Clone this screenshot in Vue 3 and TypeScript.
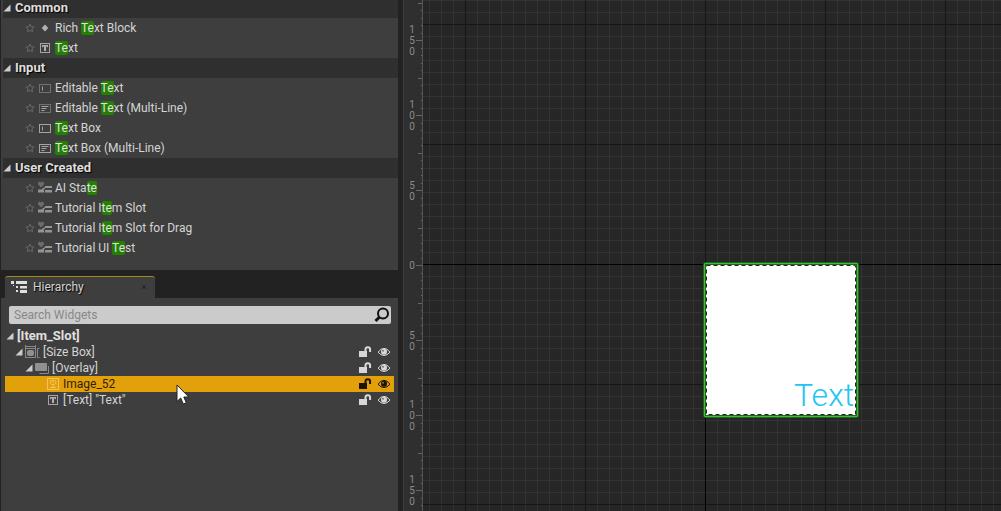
<script setup lang="ts">
import { computed, onBeforeUnmount, onMounted, ref } from 'vue'

interface PaletteItem {
  icon: 'rich' | 'text' | 'edit' | 'editMulti' | 'box' | 'boxMulti' | 'user'
  parts: [string, string, string]
}
interface PaletteGroup {
  name: string
  items: PaletteItem[]
}
interface TreeRow {
  label: string
  icon: 'none' | 'size' | 'overlay' | 'image' | 'text'
  depth: number
  selected?: boolean
}

const groups: PaletteGroup[] = [
  {
    name: 'Common',
    items: [
      { icon: 'rich', parts: ['Rich ', 'Te', 'xt Block'] },
      { icon: 'text', parts: ['', 'Te', 'xt'] },
    ],
  },
  {
    name: 'Input',
    items: [
      { icon: 'edit', parts: ['Editable ', 'Te', 'xt'] },
      { icon: 'editMulti', parts: ['Editable ', 'Te', 'xt (Multi-Line)'] },
      { icon: 'box', parts: ['', 'Te', 'xt Box'] },
      { icon: 'boxMulti', parts: ['', 'Te', 'xt Box (Multi-Line)'] },
    ],
  },
  {
    name: 'User Created',
    items: [
      { icon: 'user', parts: ['AI Sta', 'te', ''] },
      { icon: 'user', parts: ['Tutorial I', 'te', 'm Slot'] },
      { icon: 'user', parts: ['Tutorial I', 'te', 'm Slot for Drag'] },
      { icon: 'user', parts: ['Tutorial UI ', 'Te', 'st'] },
    ],
  },
]

const tree: TreeRow[] = [
  { label: '[Item_Slot]', icon: 'none', depth: 0 },
  { label: '[Size Box]', icon: 'size', depth: 1 },
  { label: '[Overlay]', icon: 'overlay', depth: 2 },
  { label: 'Image_52', icon: 'image', depth: 3, selected: true },
  { label: '[Text] "Text"', icon: 'text', depth: 3 },
]

const viewHeight = ref(window.innerHeight)
const measure = () => {
  viewHeight.value = window.innerHeight
}
onMounted(() => window.addEventListener('resize', measure))
onBeforeUnmount(() => window.removeEventListener('resize', measure))

const rulerOrigin = 265
const ticks = computed(() => {
  const count = Math.ceil(viewHeight.value / 7.5) + 1
  return Array.from({ length: count }, (_, i) => {
    const n = i - 35
    const length = n % 10 === 0 ? 7 : n % 5 === 0 ? 5 : 2
    return { y: rulerOrigin + Math.round(n * 7.5), length }
  })
})
const labels = computed(() => {
  const count = Math.floor((viewHeight.value - 20 - rulerOrigin) / 75) + 4
  return Array.from({ length: Math.max(count, 0) }, (_, i) => {
    const n = i - 3
    const digits = String(Math.abs(n) * 50).split('')
    return digits.map((digit, k) => ({
      digit,
      y: rulerOrigin + n * 75 + 4 + Math.round((k - (digits.length - 1) / 2) * 11),
      key: `${n}-${k}`,
    }))
  }).flat()
})
</script>

<template>
  <main class="editor">
    <div class="side">
      <section class="palette" aria-label="Palette">
        <div class="groups">
          <template v-for="group in groups" :key="group.name">
            <h2 class="group">
              <svg class="arrow" viewBox="0 0 8 8" aria-hidden="true"><path d="M7.5 0.5v7h-7z" /></svg>
              {{ group.name }}
            </h2>
            <ul class="items">
              <li v-for="item in group.items" :key="item.parts.join('')" class="item">
                <button class="star" type="button" :aria-label="'Favorite ' + item.parts.join('')">
                  <svg viewBox="0 0 10 10">
                    <path d="M5 1l1.2 2.7 2.9.3-2.2 1.9.7 2.9L5 7.3 2.4 8.8l.7-2.9L.9 4l2.9-.3z" />
                  </svg>
                </button>
                <svg class="glyph" viewBox="0 0 16 16" aria-hidden="true">
                  <path v-if="item.icon === 'rich'" class="fill" d="M8 4.5l3.3 3.5L8 11.5 4.7 8z" />
                  <template v-else-if="item.icon === 'text'">
                    <rect class="line" x="3.5" y="3.5" width="9" height="9" />
                    <path class="fill" d="M5 5h6v2.300h-1V6.500H9v4.500H7V6.500H6v.8H5z" />
                  </template>
                  <template v-else-if="item.icon === 'user'">
                    <path class="heart" d="M1 3l1.500-1.500L4 2.500l1.500-1L7 3v1.500L4 7.500 1 4.500z" />
                    <path class="user" d="M8 6h7v2H8zM8 10h7v2.500H8zM1 9.500h6v3H1z" />
                    <path class="user" d="M4 9.500L8 7v1.500L6 10z" />
                  </template>
                  <template v-else>
                    <rect
                      class="line"
                      :class="{ dotted: item.icon === 'edit' || item.icon === 'editMulti' }"
                      x="2.5"
                      y="4.5"
                      width="11"
                      height="8"
                    />
                    <path
                      v-if="item.icon === 'edit' || item.icon === 'box'"
                      class="line"
                      d="M5.5 6.5v4"
                    />
                    <path v-else class="line" d="M4.5 6.5h7M4.5 8.5h5M4.5 10.5h3" />
                  </template>
                </svg>
                <span class="name">{{ item.parts[0] }}<mark>{{ item.parts[1] }}</mark>{{ item.parts[2] }}</span>
              </li>
            </ul>
          </template>
        </div>
      </section>

      <section class="hierarchy" aria-label="Hierarchy">
        <div class="tabs">
          <div class="tab">
            <svg class="tab-icon" viewBox="0 0 16 14" aria-hidden="true">
              <path d="M0 1h3v3H0zM5 1h11v3H5zM5 6h2v2H5zM9 6h7v2.500H9zM5 10h2v2H5zM9 10h7v3H9zM2 5h1v1H2z" />
            </svg>
            <span>Hierarchy</span>
            <button class="close" type="button" aria-label="Close Hierarchy">
              <svg viewBox="0 0 6 6"><path d="M1 1l4 4M5 1l-4 4" /></svg>
            </button>
          </div>
        </div>
        <div class="panel">
          <label class="search">
            <input type="text" placeholder="Search Widgets" aria-label="Search Widgets" />
            <svg viewBox="0 0 16 16" aria-hidden="true">
              <circle cx="9" cy="6.5" r="5" />
              <path class="handle" d="M5.300 10.300L1.500 14" />
            </svg>
          </label>
          <ul class="tree">
            <li
              v-for="row in tree"
              :key="row.label"
              class="row"
              :class="['depth-' + row.depth, { selected: row.selected }]"
            >
              <svg v-if="row.depth < 3" class="arrow" viewBox="0 0 8 8" aria-hidden="true">
                <path d="M7.5 0.5v7h-7z" />
              </svg>
              <svg v-if="row.icon !== 'none'" class="glyph" viewBox="0 0 16 16" aria-hidden="true">
                <template v-if="row.icon === 'size'">
                  <rect class="dim" x="1.5" y="4.5" width="10" height="9" />
                  <rect class="core" x="3" y="6" width="7" height="6" rx="2" />
                  <path class="dim" d="M1 2.500h11M1.500 1v3M11.500 1v3M15.500 4.500h-2v9h2" />
                </template>
                <template v-else-if="row.icon === 'overlay'">
                  <rect class="core" x="1" y="3" width="12" height="8" rx="1" />
                  <path class="dim" d="M14.500 6v7.500h-9" />
                </template>
                <template v-else-if="row.icon === 'image'">
                  <rect class="pic" x="2.5" y="2.5" width="11" height="11" />
                  <path
                    class="pic"
                    d="M8 12V8M5 11.500h6M5 6a2 2 0 0 1 3-1.500A2 2 0 0 1 11 6c0 2-1.500 2.500-3 2.500S5 8 5 6zM7 6h2"
                  />
                </template>
                <template v-else>
                  <rect class="line" x="3.5" y="3.5" width="9" height="9" />
                  <path class="fill" d="M5 5h6v2.300h-1V6.500H9v4.500H7V6.500H6v.8H5z" />
                </template>
              </svg>
              <span class="label">{{ row.label }}</span>
              <template v-if="row.depth > 0">
                <button class="tool" type="button" :aria-label="'Lock ' + row.label">
                  <svg viewBox="0 0 14 12">
                    <path class="solid" d="M1 5h8v6H1z" />
                    <path class="shackle" d="M7.500 6V3.500a2.300 2.300 0 0 1 4.600 0V6" />
                  </svg>
                </button>
                <button class="tool" type="button" :aria-label="'Toggle visibility of ' + row.label">
                  <svg viewBox="0 0 14 12">
                    <path class="lid" d="M1 6.200Q7-1.500 13 6.200Q7 12.900 1 6.200z" />
                    <circle class="solid" cx="7" cy="5.800" r="3" />
                    <circle class="glint" cx="6" cy="4.800" r="1" />
                  </svg>
                </button>
              </template>
            </li>
          </ul>
        </div>
      </section>
    </div>

    <section class="designer" aria-label="Designer">
      <svg class="ruler" aria-hidden="true">
        <path v-for="tick in ticks" :key="tick.y" :d="`M${19 - tick.length} ${tick.y}.5h${tick.length}`" />
        <text v-for="label in labels" :key="label.key" x="8" :y="label.y">{{ label.digit }}</text>
      </svg>
      <div class="canvas">
        <div class="axis-x"></div>
        <div class="axis-y"></div>
        <div class="widget">
          <svg class="dashes" viewBox="0 0 150 150" aria-hidden="true">
            <rect x="0.5" y="0.5" width="149" height="149" />
          </svg>
          <span>Text</span>
        </div>
      </div>
    </section>

    <svg class="cursor" viewBox="0 0 14 22" aria-hidden="true">
      <path d="M1 1v16.500l3.700-3.500 2.600 6 3-1.300-2.500-5.700h5z" />
    </svg>
  </main>
</template>

<style>
body {
  margin: 0;
  background: #222;
}
</style>

<style scoped>
.editor {
  position: relative;
  display: flex;
  height: 100vh;
  overflow: hidden;
  background: #222;
  color: #d4d4d4;
  font: 12px/16px Roboto, 'Liberation Sans', sans-serif;
}
.editor * {
  box-sizing: border-box;
}
h2,
ul {
  margin: 0;
  padding: 0;
  list-style: none;
}
button {
  padding: 0;
  border: 0;
  background: none;
  color: inherit;
}
svg {
  display: block;
  flex: none;
}
.side {
  display: flex;
  flex: none;
  flex-direction: column;
  width: 398px;
  padding-left: 1px;
}
.palette {
  flex: none;
  padding: 0 0 12px 2px;
  overflow: hidden;
  background: #3e3e3e;
}
.groups {
  margin-top: -2px;
}
.group {
  display: flex;
  align-items: center;
  gap: 4px;
  height: 20px;
  background: #2f2f2f;
  color: #dedede;
  font-size: 13px;
  font-weight: 700;
  text-shadow: 1px 1px 1px #000;
}
.arrow {
  width: 8px;
  height: 8px;
  fill: #ccc;
}
.item {
  display: flex;
  align-items: center;
  height: 20px;
  padding-left: 22px;
}
.star {
  width: 10px;
  height: 10px;
}
.star path {
  fill: none;
  stroke: #686868;
}
.glyph {
  width: 16px;
  height: 16px;
}
.item .glyph {
  margin: 0 2px;
}
.fill {
  fill: #b0b0b0;
}
.line {
  fill: none;
  stroke: #a5a5a5;
}
.dotted {
  stroke-dasharray: 1 1;
}
.heart {
  fill: #6c6c6c;
}
.user {
  fill: #939393;
}
.name {
  white-space: pre;
}
mark {
  border-radius: 2px;
  background: #238000;
  color: #e0e0e0;
}
.hierarchy {
  display: flex;
  flex: 1;
  flex-direction: column;
  padding-top: 6px;
}
.tabs {
  padding-left: 4px;
}
.tab {
  display: flex;
  align-items: center;
  width: 150px;
  height: 22px;
  padding: 0 8px 2px 6px;
  border-top: 1px solid #a08a1c;
  border-radius: 3px 3px 0 0;
  background: #3e3e3e;
  text-shadow: 1px 1px 1px #000;
}
.tab-icon {
  width: 16px;
  height: 14px;
  margin-right: 6px;
  fill: #e0e0e0;
}
.close {
  width: 6px;
  height: 6px;
  margin-left: auto;
}
.close path {
  stroke: #222;
}
.panel {
  flex: 1;
  padding: 8px 4px 0;
  background: #3e3e3e;
}
.search {
  display: flex;
  align-items: center;
  height: 18px;
  margin: 0 3px 4px 4px;
  padding: 0 1px 0 5px;
  border-radius: 2px;
  background: #cbcbcb;
}
.search input {
  flex: 1;
  min-width: 0;
  height: 18px;
  padding: 0;
  border: 0;
  outline: 0;
  background: none;
  color: #222;
  font: inherit;
}
.search input::placeholder {
  color: #888;
  opacity: 1;
}
.search svg {
  width: 16px;
  height: 16px;
  fill: none;
  stroke: #111;
  stroke-width: 2;
}
.search .handle {
  stroke-width: 3;
}
.row {
  display: flex;
  align-items: center;
  height: 16px;
  padding-right: 3px;
}
.row .arrow {
  margin-right: 3px;
}
.depth-0 {
  padding-left: 1px;
  color: #e0e0e0;
  font-size: 13px;
  font-weight: 700;
}
.depth-1 {
  padding-left: 10px;
}
.depth-2 {
  padding-left: 20px;
}
.depth-3 {
  padding-left: 40px;
}
.row .glyph {
  margin-right: 2px;
}
.depth-1 .arrow,
.depth-2 .arrow {
  margin-right: 1px;
}
.depth-1 .glyph {
  margin-right: 3px;
}
.label {
  flex: 1;
}
.selected {
  background: #e2a00a;
  color: #33200a;
}
.dim {
  fill: none;
  stroke: #888;
}
.core {
  fill: #909090;
}
.pic {
  fill: none;
  stroke: #f2c55c;
}
.tool {
  width: 14px;
  height: 12px;
  margin-left: 5px;
  color: #d8d8d8;
}
.selected .tool {
  color: #1c1400;
}
.solid {
  fill: currentColor;
}
.shackle {
  fill: none;
  stroke: currentColor;
  stroke-width: 2;
}
.lid {
  fill: none;
  stroke: currentColor;
}
.glint {
  fill: #777;
}
.designer {
  display: flex;
  flex: 1;
  min-width: 0;
  margin-left: 5px;
}
.ruler {
  width: 20px;
  height: 100%;
  border-right: 1px solid #555;
  border-left: 1px solid #3c3c3c;
  background: #2f2f2f;
}
.ruler path {
  stroke: #666;
}
.ruler text {
  fill: #8c8c8c;
  font-size: 10px;
  text-anchor: middle;
}
.canvas {
  position: relative;
  flex: 1;
  overflow: hidden;
  background-color: #262626;
  background-image:
    linear-gradient(90deg, #161616 1px, transparent 1px),
    linear-gradient(#161616 1px, transparent 1px),
    linear-gradient(90deg, #333 1px, transparent 1px),
    linear-gradient(#333 1px, transparent 1px);
  background-position: 42px 24px, 42px 24px, 6px 0, 6px 0;
  background-size: 120px 120px, 120px 120px, 12px 12px, 12px 12px;
}
.axis-x,
.axis-y {
  position: absolute;
  background: #000;
}
.axis-x {
  top: 264px;
  right: 0;
  left: 0;
  height: 1px;
}
.axis-y {
  top: 264px;
  bottom: 0;
  left: 282px;
  width: 1px;
}
.widget {
  position: absolute;
  top: 262px;
  left: 280px;
  display: flex;
  align-items: flex-end;
  justify-content: flex-end;
  width: 156px;
  height: 156px;
  padding: 0 2px 1px 0;
  border: 3px solid #186c18;
  border-radius: 3px;
  background: #fff;
  color: #22c4f2;
  font-size: 32px;
  font-weight: 300;
  line-height: 38px;
}
.widget::before {
  position: absolute;
  inset: -2px;
  border: 1px solid #48b848;
  border-radius: 1px;
  content: '';
}
.dashes {
  position: absolute;
  inset: 0;
  width: 150px;
  height: 150px;
}
.dashes rect {
  fill: none;
  stroke: #222;
  stroke-dasharray: 4 3;
}
.cursor {
  position: absolute;
  top: 384px;
  left: 176px;
  width: 14px;
  height: 22px;
  fill: #fff;
  stroke: #222;
}
</style>
